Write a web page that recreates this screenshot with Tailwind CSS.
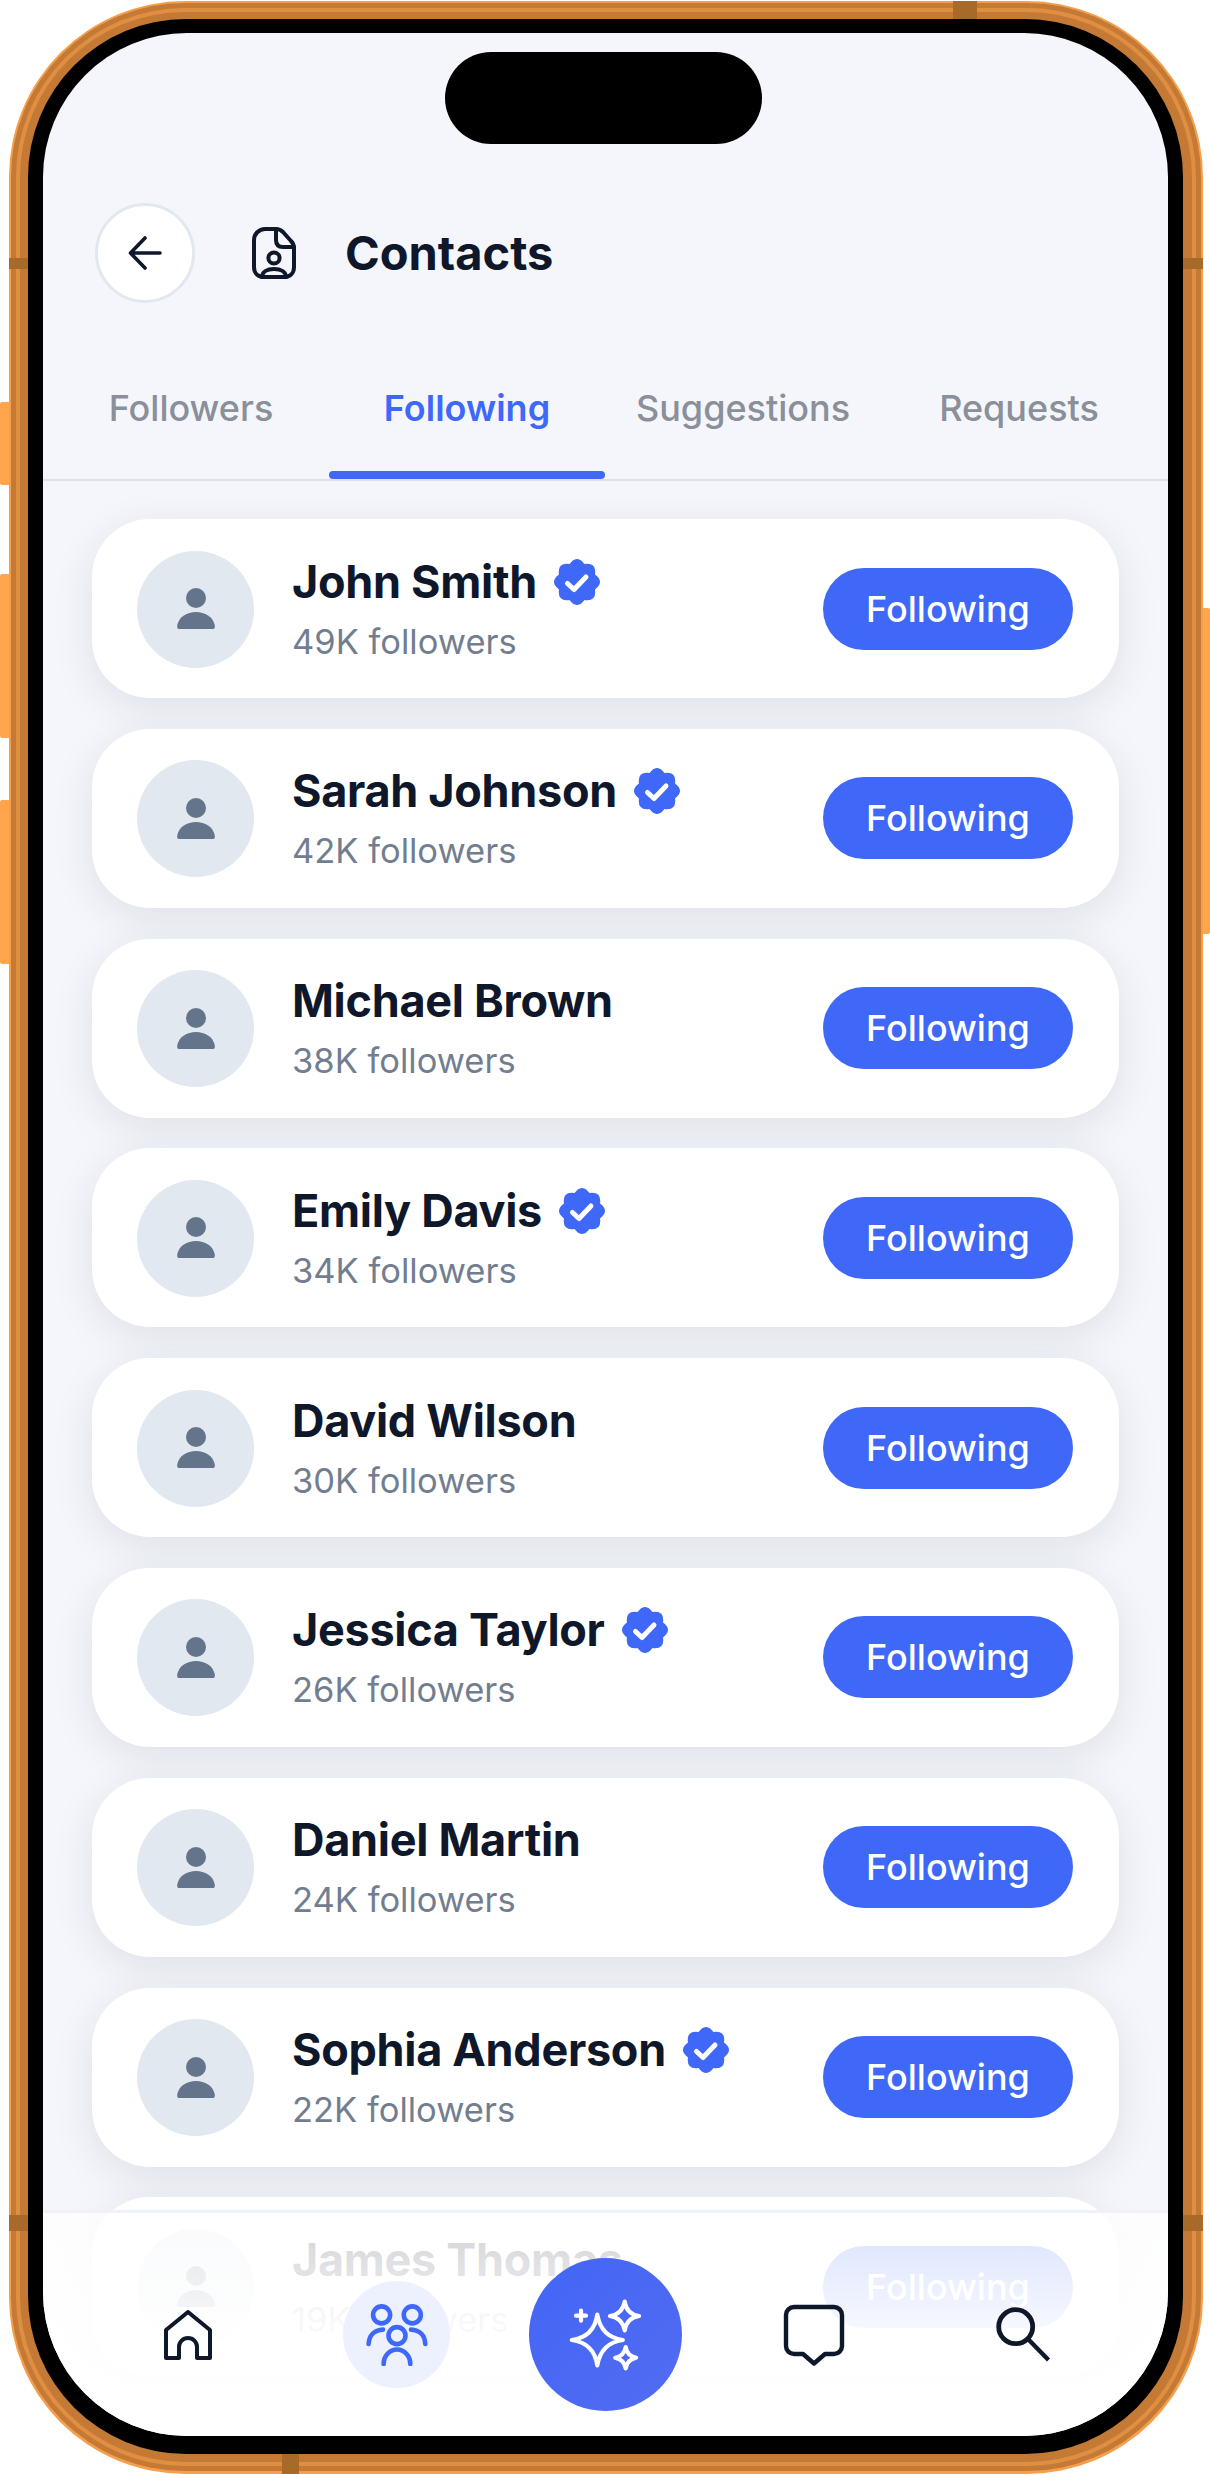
<!DOCTYPE html>
<html lang="en">

<head>
	<meta charset="UTF-8">
	<meta name="viewport" content="width=device-width, initial-scale=1.0">
	<title>Contacts</title>
	<script src="https://cdn.jsdelivr.net/npm/@tailwindcss/browser@4"></script>
</head>

<body class="bg-white font-[Inter,sans-serif]">
	<div class="relative w-[1210px] h-[2475px] overflow-hidden pl-[9px] pt-[1px]">
		<!-- side buttons -->
		<div class="absolute left-0 top-[402px] w-[10px] h-[83px] rounded-l-[2px] bg-[#FFA64D]"></div>
		<div class="absolute left-0 top-[574px] w-[10px] h-[164px] rounded-l-[2px] bg-[#FFA64D]"></div>
		<div class="absolute left-0 top-[800px] w-[10px] h-[164px] rounded-l-[2px] bg-[#FFA64D]"></div>
		<div class="absolute left-[1202px] top-[608px] w-[8px] h-[326px] rounded-r-[2px] bg-[#FFA64D]"></div>

		<!-- phone frame -->
		<div class="relative w-[1194px] h-[2473px] rounded-[176px] bg-[#F59E4C] p-[2px] pb-[3px]">
			<div class="h-full rounded-[174px] bg-[#C47A35] p-[5px]">
				<div class="h-full rounded-[169px] bg-[#E08F42] p-[4px]">
					<div class="h-full rounded-[165px] bg-[#C47A35] pl-[8px] pr-[9px] pt-[7px] pb-[8px]">
						<div class="h-full rounded-[158px] bg-black px-[15px] pt-[14px] pb-[18px]">
							<!-- screen -->
							<div class="relative h-[2403px] overflow-hidden rounded-[144px] bg-[#F4F6FB]">
								<div class="absolute left-[402px] top-[19px] z-30 w-[317px] h-[92px] rounded-full bg-black"></div>

								<header class="flex items-center pl-[52px] pt-[170px]">
									<button class="flex w-[100px] h-[100px] items-center justify-center rounded-full border-[3px] border-[#E2E8F0] bg-white">
										<svg width="36" height="36" viewBox="0 0 36 36" fill="none" stroke="#0F172A" stroke-width="3.6" stroke-linecap="round" stroke-linejoin="round">
											<path d="M33 18H4M18 3 3.5 18 18 33" />
										</svg>
									</button>
									<svg class="ml-[56px]" width="46" height="54" viewBox="0 0 46 54" fill="none" stroke="#0F172A" stroke-width="4" stroke-linecap="round" stroke-linejoin="round">
										<path d="M14 3H25C28 3 30 4 32 6L40 15C42 17 43 19 43 22V41C43 47 39 51 33 51H13C7 51 3 47 3 41V14C3 8 8 3 14 3Z" />
										<path d="M25 3V14C25 18 27 21 32 21H43" />
										<circle cx="23" cy="32" r="5.6" />
										<path d="M11 51C11 46 16 43 23 43S35 46 35 51" />
									</svg>
									<h1 class="ml-[48px] text-[47px] leading-[54px] font-bold text-[#0F172A]">Contacts</h1>
								</header>

								<nav class="mt-[83px] grid grid-cols-4 border-b-[2px] border-[#DDE2EA] pl-[10px] pr-[11px]">
									<div class="text-center text-[36px] leading-[44px] font-medium text-[#8A8F99]">Followers<div class="mt-[41px] h-[8px]"></div></div>
									<div class="text-center text-[36px] leading-[44px] font-semibold text-[#3F68F9]">Following<div class="mt-[41px] h-[8px] rounded-full bg-[#3F68F9]"></div></div>
									<div class="text-center text-[36px] leading-[44px] font-medium text-[#8A8F99]">Suggestions<div class="mt-[41px] h-[8px]"></div></div>
									<div class="text-center text-[36px] leading-[44px] font-medium text-[#8A8F99]">Requests<div class="mt-[41px] h-[8px]"></div></div>
								</nav>

								<ul id="contactList" class="flex flex-col gap-[30.8px] px-[49px] pt-[38px]"></ul>

								<!-- bottom bar, lies over the list -->
								<div class="absolute bottom-0 left-0 right-0 z-20 grid h-[226px] grid-cols-5 items-center border-t-[3px] border-[#EFF2F8] bg-linear-to-b from-white/80 via-white/95 to-white px-[41px] pt-[20px]">
									<div class="flex justify-center">
										<svg width="48" height="50" viewBox="0 0 48 50" fill="none" stroke="#0F172A" stroke-width="4" stroke-linejoin="round">
											<path d="M2 20 24 2 46 20V48H33V37A9 9 0 0 0 15 37V48H2Z" />
										</svg>
									</div>
									<div class="flex justify-center">
										<div class="flex w-[107px] h-[107px] items-center justify-center rounded-full bg-[#EBF0FE]/90">
											<svg width="62" height="62" viewBox="0 0 62 62" fill="none" stroke="#3F68F9" stroke-width="4.6" stroke-linecap="round">
												<circle cx="15.6" cy="10.9" r="8.5" />
												<circle cx="46.3" cy="10.9" r="8.5" />
												<circle cx="31" cy="31.6" r="8.5" />
												<path d="M17.6 60C17.6 52 23.6 45.5 31 45.5S44.3 52 44.3 60" />
												<path d="M17 25.6C8 26 3 32 2.6 40" />
												<path d="M45 25.6C54 26 59 32 59.3 40" />
											</svg>
										</div>
									</div>
									<div class="flex justify-center">
										<div class="flex w-[153px] h-[153px] items-center justify-center rounded-full bg-linear-to-br from-[#4266F6] to-[#536BF1]">
											<svg width="72" height="72" viewBox="0 0 72 72" fill="none" stroke="#fff" stroke-width="4.2" stroke-linecap="round" stroke-linejoin="round">
												<path d="M28.3 15.5Q32 38 53.8 41 32 44 28.3 66.5 25 44 2.8 41 25 38 28.3 15.5Z" />
												<path d="M55.7 2.5Q57.5 15 70 17 57.5 19 55.7 31.5 53.5 19 41 17 53.5 15 55.7 2.5Z" />
												<path d="M56.7 48Q58 57 67.2 58.7 58 60.5 56.7 69.5 55.2 60.5 46.2 58.7 55.2 57 56.7 48Z" />
												<path d="M12 11.7V21.7M7 16.7H17" />
											</svg>
										</div>
									</div>
									<div class="flex justify-center">
										<svg width="62" height="62" viewBox="0 0 62 62" fill="none" stroke="#0F172A" stroke-width="4.4" stroke-linejoin="round">
											<path d="M11 3H51A8 8 0 0 1 59 11V42A8 8 0 0 1 51 50H42L31 59.5 20 50H11A8 8 0 0 1 3 42V11A8 8 0 0 1 11 3Z" />
										</svg>
									</div>
									<div class="flex justify-center">
										<svg width="56" height="56" viewBox="0 0 56 56" fill="none" stroke="#0F172A">
											<circle cx="20.7" cy="19.7" r="17" stroke-width="4.8" />
											<path d="M33 32 53.5 53" stroke-width="4.4" />
										</svg>
									</div>
								</div>
							</div>
						</div>
					</div>
				</div>
			</div>
		</div>

		<!-- antenna bands -->
		<div class="absolute left-[9px] top-[258px] w-[19px] h-[11px] bg-[#A86A28]"></div>
		<div class="absolute left-[1183px] top-[258px] w-[20px] h-[11px] bg-[#A86A28]"></div>
		<div class="absolute left-[9px] top-[2215px] w-[19px] h-[16px] bg-[#A86A28]"></div>
		<div class="absolute left-[1183px] top-[2215px] w-[20px] h-[16px] bg-[#A86A28]"></div>
		<div class="absolute left-[953px] top-[1px] w-[24px] h-[18px] bg-[#A86A28]"></div>
		<div class="absolute left-[282px] top-[2454px] w-[17px] h-[20px] bg-[#A86A28]"></div>
	</div>

	<script>
		const contacts = [
			{ name: "John Smith", followers: "49K", verified: true },
			{ name: "Sarah Johnson", followers: "42K", verified: true },
			{ name: "Michael Brown", followers: "38K", verified: false },
			{ name: "Emily Davis", followers: "34K", verified: true },
			{ name: "David Wilson", followers: "30K", verified: false },
			{ name: "Jessica Taylor", followers: "26K", verified: true },
			{ name: "Daniel Martin", followers: "24K", verified: false },
			{ name: "Sophia Anderson", followers: "22K", verified: true },
			{ name: "James Thomas", followers: "19K", verified: false }
		];

		const badge = `<svg class="ml-[17px]" width="46" height="46" viewBox="0 0 46 46">
			<path fill="#3F68F9" d="M15.54 4.98Q23-5 30.46 4.98 42.8 3.2 41.02 15.54 51 23 41.02 30.46 42.8 42.8 30.46 41.02 23 51 15.54 41.02 3.2 42.8 4.98 30.46-5 23 4.98 15.54 3.2 3.2 15.54 4.98Z" />
			<path fill="none" stroke="#fff" stroke-width="5" stroke-linecap="round" stroke-linejoin="round" d="M13.5 24.5 20 30.5 32 18" />
		</svg>`;

		const list = document.getElementById('contactList');
		contacts.forEach(c => {
			const row = document.createElement('li');
			row.className = "flex h-[179px] shrink-0 items-center rounded-[58px] bg-white pl-[45px] pr-[46px] pt-[1px] shadow-[0_10px_40px_rgba(30,41,59,0.1)]";
			row.innerHTML = `
				<div class="flex w-[117px] h-[117px] items-center justify-center rounded-full bg-[#E2E8F0]">
					<svg width="40" height="42" viewBox="0 0 40 42" fill="#64748B">
						<circle cx="20" cy="10" r="10" />
						<path d="M3 41C1 41 1 39 1.3 37 3 29 11 24 20 24 29 24 37 29 38.7 37 39 39 39 41 37 41Z" />
					</svg>
				</div>
				<div class="ml-[38px] flex-1">
					<div class="flex h-[46px] items-center text-[45px] leading-[46px] tracking-[-0.3px] font-[650] text-[#0F172A]">${c.name}${c.verified ? badge : ''}</div>
					<div class="mt-[19px] text-[34.5px] leading-[36px] text-[#727E90]">${c.followers} followers</div>
				</div>
				<button class="-mt-[1px] w-[250px] h-[82px] rounded-full bg-[#3F68F9] text-[36px] font-medium text-white">Following</button>`;
			list.appendChild(row);
		});
	</script>
</body>

</html>
